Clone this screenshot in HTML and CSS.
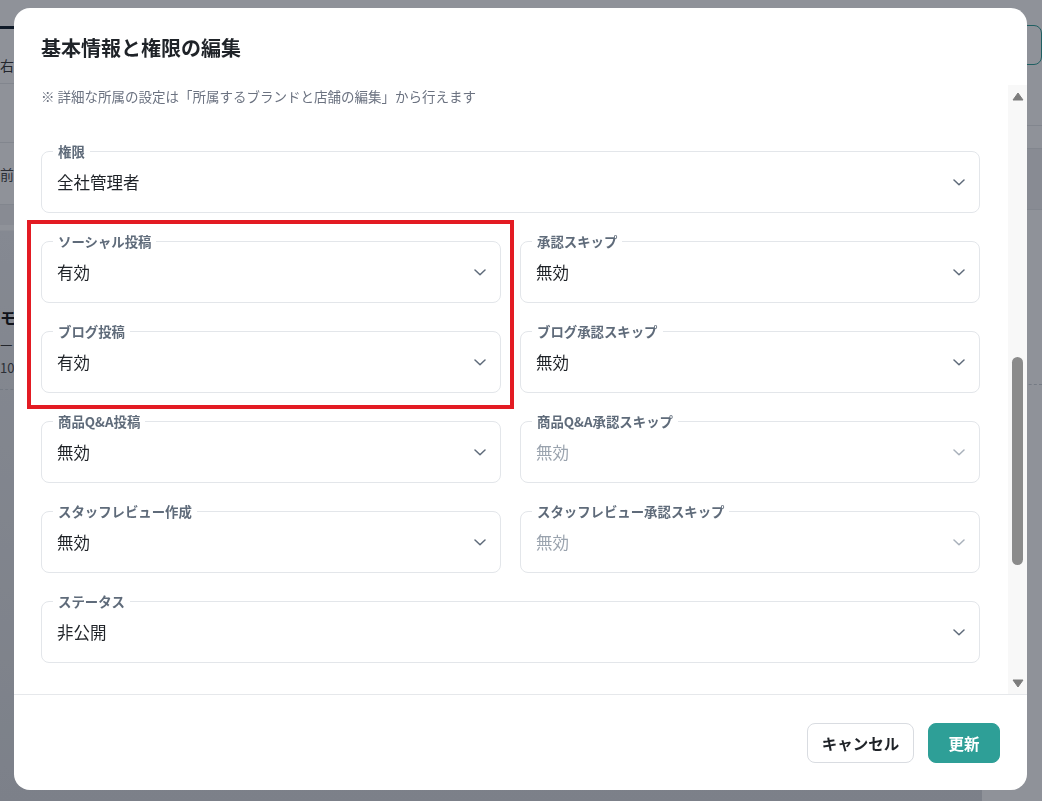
FILE: index.html
```html
<!DOCTYPE html>
<html lang="ja">
<head>
<meta charset="utf-8">
<title>基本情報と権限の編集</title>
<link rel="stylesheet" href="styles.css">
</head>
<body>
<div class="behind">
  <div class="behind-left">
    <div class="bl-tab"></div>
    <div class="bl-text">右</div>
    <div class="bl-row"></div>
    <div class="bl-row2"><span>前</span></div>
    <div class="bl-band"></div>
    <div class="bl-lower">
      <div class="bl-bold">モ</div>
      <div class="bl-dash">—</div>
      <div class="bl-num">10</div>
      <div class="bl-dashed"></div>
    </div>
  </div>
  <div class="behind-right">
    <div class="br-btn">保</div>
    <div class="br-line1"></div>
    <div class="br-band"></div>
    <div class="br-text">看</div>
    <div class="br-dashed"></div>
  </div>
</div>

<div class="backdrop">
  <div class="modal">
    <div class="modal-title">基本情報と権限の編集</div>
    <div class="modal-body">
      <div class="body-content">
        <p class="note">※ 詳細な所属の設定は「所属するブランドと店舗の編集」から行えます</p>
        <div class="fields">
          <div class="field span2">
            <span class="field-label">権限</span>
            <span class="field-value">全社管理者</span>
            <svg class="chev" viewBox="0 0 12 7" width="12" height="7"><path d="M1 1 L6 5.8 L11 1"/></svg>
          </div>
          <div class="field">
            <span class="field-label">ソーシャル投稿</span>
            <span class="field-value">有効</span>
            <svg class="chev" viewBox="0 0 12 7" width="12" height="7"><path d="M1 1 L6 5.8 L11 1"/></svg>
          </div>
          <div class="field">
            <span class="field-label">承認スキップ</span>
            <span class="field-value">無効</span>
            <svg class="chev" viewBox="0 0 12 7" width="12" height="7"><path d="M1 1 L6 5.8 L11 1"/></svg>
          </div>
          <div class="field">
            <span class="field-label">ブログ投稿</span>
            <span class="field-value">有効</span>
            <svg class="chev" viewBox="0 0 12 7" width="12" height="7"><path d="M1 1 L6 5.8 L11 1"/></svg>
          </div>
          <div class="field">
            <span class="field-label">ブログ承認スキップ</span>
            <span class="field-value">無効</span>
            <svg class="chev" viewBox="0 0 12 7" width="12" height="7"><path d="M1 1 L6 5.8 L11 1"/></svg>
          </div>
          <div class="field">
            <span class="field-label">商品Q&amp;A投稿</span>
            <span class="field-value">無効</span>
            <svg class="chev" viewBox="0 0 12 7" width="12" height="7"><path d="M1 1 L6 5.8 L11 1"/></svg>
          </div>
          <div class="field disabled">
            <span class="field-label">商品Q&amp;A承認スキップ</span>
            <span class="field-value">無効</span>
            <svg class="chev" viewBox="0 0 12 7" width="12" height="7"><path d="M1 1 L6 5.8 L11 1"/></svg>
          </div>
          <div class="field">
            <span class="field-label">スタッフレビュー作成</span>
            <span class="field-value">無効</span>
            <svg class="chev" viewBox="0 0 12 7" width="12" height="7"><path d="M1 1 L6 5.8 L11 1"/></svg>
          </div>
          <div class="field disabled">
            <span class="field-label">スタッフレビュー承認スキップ</span>
            <span class="field-value">無効</span>
            <svg class="chev" viewBox="0 0 12 7" width="12" height="7"><path d="M1 1 L6 5.8 L11 1"/></svg>
          </div>
          <div class="field span2">
            <span class="field-label">ステータス</span>
            <span class="field-value">非公開</span>
            <svg class="chev" viewBox="0 0 12 7" width="12" height="7"><path d="M1 1 L6 5.8 L11 1"/></svg>
          </div>
        </div>
      </div>
      <div class="scrollbar">
        <div class="sb-arrow sb-up">
          <svg viewBox="0 0 12 9" width="12" height="9"><path d="M6 1 L11 8 L1 8 Z"/></svg>
        </div>
        <div class="sb-track"><div class="sb-thumb"></div></div>
        <div class="sb-arrow sb-down">
          <svg viewBox="0 0 12 9" width="12" height="9"><path d="M1 1 L11 1 L6 8 Z"/></svg>
        </div>
      </div>
    </div>
    <div class="modal-footer">
      <button class="btn btn-cancel" type="button">キャンセル</button>
      <button class="btn btn-primary" type="button">更新</button>
    </div>
  </div>
  <div class="highlight"></div>
</div>
</body>
</html>
```

FILE: styles.css
```css
* { box-sizing: border-box; }

html, body {
  margin: 0;
  padding: 0;
  width: 1042px;
  height: 801px;
  overflow: hidden;
}

body {
  font-family: "Noto Sans CJK JP", "Noto Sans", sans-serif;
  background: #ffffff;
  color: #1f2328;
}

/* ---------- page behind the dialog ---------- */
.behind {
  display: flex;
  justify-content: space-between;
  height: 801px;
  background: linear-gradient(to bottom, #ffffff 0, #ffffff 230px, #eceef1 231px, #dcdee1 801px);
}

.behind-left {
  width: 60px;
  display: flex;
  flex-direction: column;
}

.bl-tab {
  margin-top: 26px;
  width: 14px;
  height: 3px;
  background: #0f1d2b;
}

.bl-text {
  margin-top: 26px;
  font-size: 14px;
  line-height: 20px;
  color: #333;
}

.bl-row {
  margin-top: 8px;
  height: 60px;
  border-top: 1px solid #e6e8eb;
  border-bottom: 1px solid #e6e8eb;
}

.bl-row2 {
  height: 62px;
  display: flex;
  align-items: center;
  font-size: 14px;
  color: #444;
  border-bottom: 1px solid #e6e8eb;
}

.bl-band {
  height: 20px;
  background: #f1f2f4;
}

.bl-lower {
  padding-top: 80px;
}

.bl-bold {
  font-size: 16px;
  font-weight: 700;
  line-height: 24px;
  color: #111;
}

.bl-dash {
  margin-top: 4px;
  font-size: 14px;
  line-height: 20px;
  color: #333;
}

.bl-num {
  margin-top: 6px;
  font-size: 13px;
  line-height: 18px;
  color: #444;
}

.bl-dashed {
  margin-top: 12px;
  border-top: 1px dashed #cfd3d8;
}

.behind-right {
  width: 60px;
  display: flex;
  flex-direction: column;
  background: #ffffff;
}

.br-btn {
  margin-top: 25px;
  margin-left: 2px;
  height: 40px;
  border: 1px solid #2e9f97;
  border-radius: 8px;
  font-size: 14px;
  line-height: 38px;
  padding-left: 6px;
  color: #2e9f97;
}

.br-line1 {
  margin-top: 60px;
  height: 23px;
  border-top: 1px solid #e6e8eb;
}

.br-band {
  height: 62px;
  background: #f1f2f4;
  border-top: 1px solid #e6e8eb;
  border-bottom: 1px solid #e6e8eb;
}

.br-text {
  margin-top: 122px;
  font-size: 14px;
  line-height: 20px;
  color: #222;
}

.br-dashed {
  margin-top: 32px;
  border-top: 1px dashed #cfd3d8;
}

/* ---------- overlay ---------- */
.backdrop {
  position: fixed;
  inset: 0;
  background: rgba(17, 24, 39, 0.47);
  display: flex;
  align-items: flex-start;
  padding: 8px 15px 0 14px;
}

.modal {
  width: 1013px;
  height: 782px;
  background: #ffffff;
  border-radius: 16px;
  overflow: hidden;
  display: flex;
  flex-direction: column;
}

.modal-title {
  flex: none;
  height: 77px;
  padding: 26px 27px 0;
  font-size: 20px;
  line-height: 28px;
  font-weight: 700;
  color: #1f2328;
}

.modal-body {
  flex: none;
  height: 609px;
  display: flex;
  overflow: hidden;
}

.body-content {
  flex: 1;
  padding: 1px 28px 0 27px;
  overflow: hidden;
}

.note {
  margin: 0 0 45px;
  font-size: 13.5px;
  line-height: 20px;
  color: #6b7280;
}

.fields {
  display: grid;
  grid-template-columns: 1fr 1fr;
  column-gap: 19px;
  row-gap: 28px;
}

.field {
  position: relative;
  height: 62px;
  border: 1px solid #e3e6ea;
  border-radius: 8px;
  display: flex;
  align-items: center;
  justify-content: space-between;
  padding: 0 14px 0 15px;
}

.span2 { grid-column: 1 / 3; }

.field-label {
  position: absolute;
  top: -10px;
  left: 11px;
  padding: 0 5px;
  background: #ffffff;
  font-size: 13.4px;
  line-height: 18px;
  font-weight: 700;
  color: #5f6b7a;
  white-space: nowrap;
}

.field-value {
  font-size: 16.5px;
  line-height: 24px;
  color: #1f2328;
}

.chev {
  display: block;
  fill: none;
  stroke: #5f6b7a;
  stroke-width: 1.5;
  stroke-linecap: round;
  stroke-linejoin: round;
}

.disabled .field-value { color: #9aa3ae; }
.disabled .chev { stroke: #a9b1bb; }

/* ---------- fake scrollbar ---------- */
.scrollbar {
  flex: none;
  width: 19px;
  background: #f8f8f8;
  display: flex;
  flex-direction: column;
}

.sb-arrow {
  display: flex;
  align-items: center;
  justify-content: center;
}

.sb-arrow svg {
  display: block;
  fill: #7d7d7d;
  stroke: #7d7d7d;
  stroke-width: 1;
  stroke-linejoin: round;
}

.sb-up { height: 22px; padding-top: 1px; }
.sb-down { height: 20px; padding-bottom: 1px; }

.sb-track {
  flex: 1;
  padding-top: 250px;
}

.sb-thumb {
  width: 11px;
  height: 208px;
  margin: 0 auto;
  border-radius: 6px;
  background: #8b8b8b;
}

/* ---------- footer ---------- */
.modal-footer {
  flex: 1;
  border-top: 1px solid #e6e8eb;
  display: flex;
  align-items: center;
  justify-content: flex-end;
  gap: 14px;
  padding: 0 27px 0 0;
}

.btn {
  font-family: "Noto Sans CJK JP", "Noto Sans", sans-serif;
  font-size: 15.5px;
  font-weight: 700;
  line-height: 20px;
  height: 40px;
  border-radius: 8px;
  cursor: pointer;
  padding: 0;
}

.btn-cancel {
  width: 107px;
  background: #ffffff;
  border: 1px solid #d9dce1;
  color: #1f2328;
}

.btn-primary {
  width: 72px;
  background: #2e9f97;
  border: 1px solid #2e9f97;
  color: #ffffff;
}

/* ---------- annotation box ---------- */
.highlight {
  position: absolute;
  left: 27px;
  top: 220px;
  width: 487px;
  height: 189px;
  border: 4.5px solid #e31b23;
  pointer-events: none;
}
```
